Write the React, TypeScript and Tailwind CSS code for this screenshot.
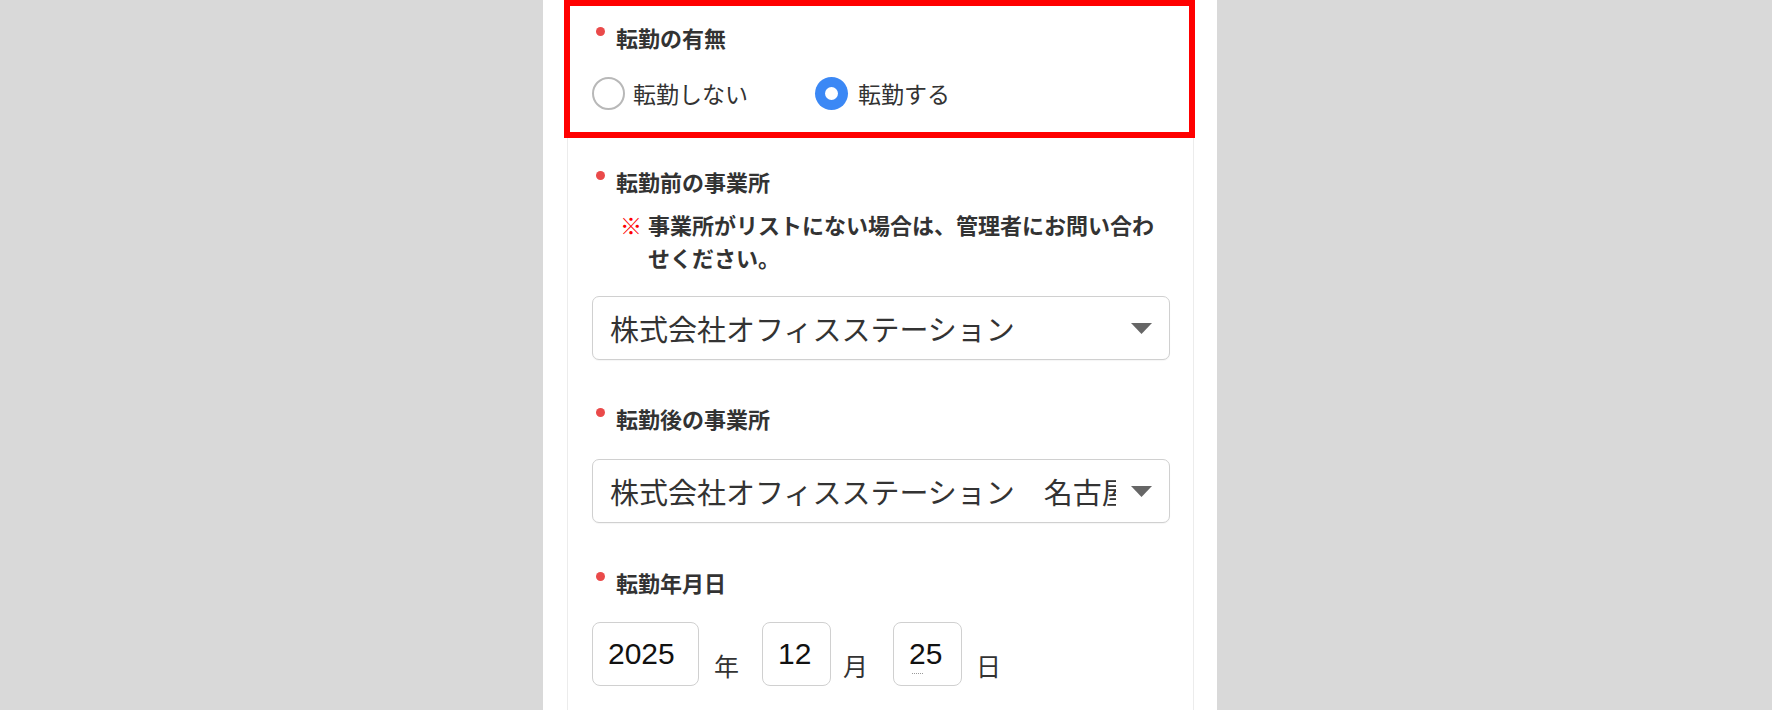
import type { ReactNode } from "react";

const jp = "font-['Noto_Sans_CJK_JP','Noto_Sans',sans-serif]";

const Label = ({ children }: { children: ReactNode }) => (
  <div className={`relative pl-[24px] text-[22px] leading-[30px] font-bold text-[#333] ${jp}`}>
    <span className="absolute left-[4px] top-[5px] h-[9px] w-[9px] rounded-full bg-[#ea4a4a]" />
    {children}
  </div>
);

const Caret = () => (
  <svg width="21" height="11" viewBox="0 0 21 11" className="ml-[15px] shrink-0">
    <path d="M0 0 H21 L10.5 11 Z" fill="#666" />
  </svg>
);

const SelectBox = ({ value }: { value: string }) => (
  <div className="flex h-[64px] items-center rounded-[7px] border border-[#d0d0d0] bg-white pl-[17px] pr-[17px] shadow-[0_1px_1px_rgba(0,0,0,0.04)]">
    <span className={`min-w-0 flex-1 overflow-hidden whitespace-nowrap text-[29px] leading-[40px] text-[#333] ${jp}`}>
      {value}
    </span>
    <Caret />
  </div>
);

const DateBox = ({ value, width, dots }: { value: string; width: string; dots?: boolean }) => (
  <div
    className={`relative flex h-[64px] items-center rounded-[8px] border border-[#d0d0d0] bg-white pl-[15px] ${width}`}
  >
    <span className="font-['Liberation_Sans',Arial,sans-serif] text-[30px] leading-[34px] text-[#111]">
      {value}
    </span>
    {dots && (
      <span className="absolute left-[18px] top-[50px] w-[11px] border-b border-dotted border-[#9a9a9a]" />
    )}
  </div>
);

const Suffix = ({ children, ml }: { children: ReactNode; ml: string }) => (
  <span className={`mb-[8px] text-[25px] leading-[25px] text-[#333] ${jp} ${ml}`}>{children}</span>
);

export default function App() {
  return (
    <div className="h-[710px] w-full overflow-hidden bg-[#d9d9d9]">
      <div className="ml-[543px] h-full w-[674px] bg-white">
        {/* highlighted section */}
        <div className="ml-[21px] w-[631px] border-[6px] border-[#ff0000] pb-[22px] pl-[22px] pt-[16px]">
          <Label>転勤の有無</Label>
          <div className="mt-[25px] flex items-center">
            <span className="h-[33px] w-[33px] rounded-full border-2 border-[#b8b8b8] bg-white" />
            <span className={`ml-[8px] text-[23px] leading-[33px] text-[#333] ${jp}`}>転勤しない</span>
            <span className="ml-[67px] flex h-[33px] w-[33px] items-center justify-center rounded-full bg-[#3b88f5]">
              <span className="h-[13px] w-[13px] rounded-full bg-white" />
            </span>
            <span className={`ml-[10px] text-[23px] leading-[33px] text-[#333] ${jp}`}>転勤する</span>
          </div>
        </div>

        <div className="ml-[24px] h-full w-[627px] border-x border-[#ececec] pl-[24px] pr-[23px] pt-[28px]">
          <Label>転勤前の事業所</Label>
          <div className={`mt-[12px] flex pl-[28px] text-[22px] leading-[33px] font-bold ${jp}`}>
            <span className="w-[28px] shrink-0 text-[#ff0000]">※</span>
            <span className="flex-1 text-[#333]">事業所がリストにない場合は、管理者にお問い合わせください。</span>
          </div>
          <div className="mt-[22px]">
            <SelectBox value="株式会社オフィスステーション" />
          </div>

          <div className="mt-[43px]">
            <Label>転勤後の事業所</Label>
          </div>
          <div className="mt-[26px]">
            <SelectBox value="株式会社オフィスステーション　名古屋支店" />
          </div>

          <div className="mt-[44px]">
            <Label>転勤年月日</Label>
          </div>
          <div className="mt-[25px] flex items-end">
            <DateBox value="2025" width="w-[107px]" />
            <Suffix ml="ml-[15px]">年</Suffix>
            <div className="ml-[23px]">
              <DateBox value="12" width="w-[69px]" />
            </div>
            <Suffix ml="ml-[12px]">月</Suffix>
            <div className="ml-[25px]">
              <DateBox value="25" width="w-[69px]" dots />
            </div>
            <Suffix ml="ml-[14px]">日</Suffix>
          </div>
        </div>
      </div>
    </div>
  );
}
